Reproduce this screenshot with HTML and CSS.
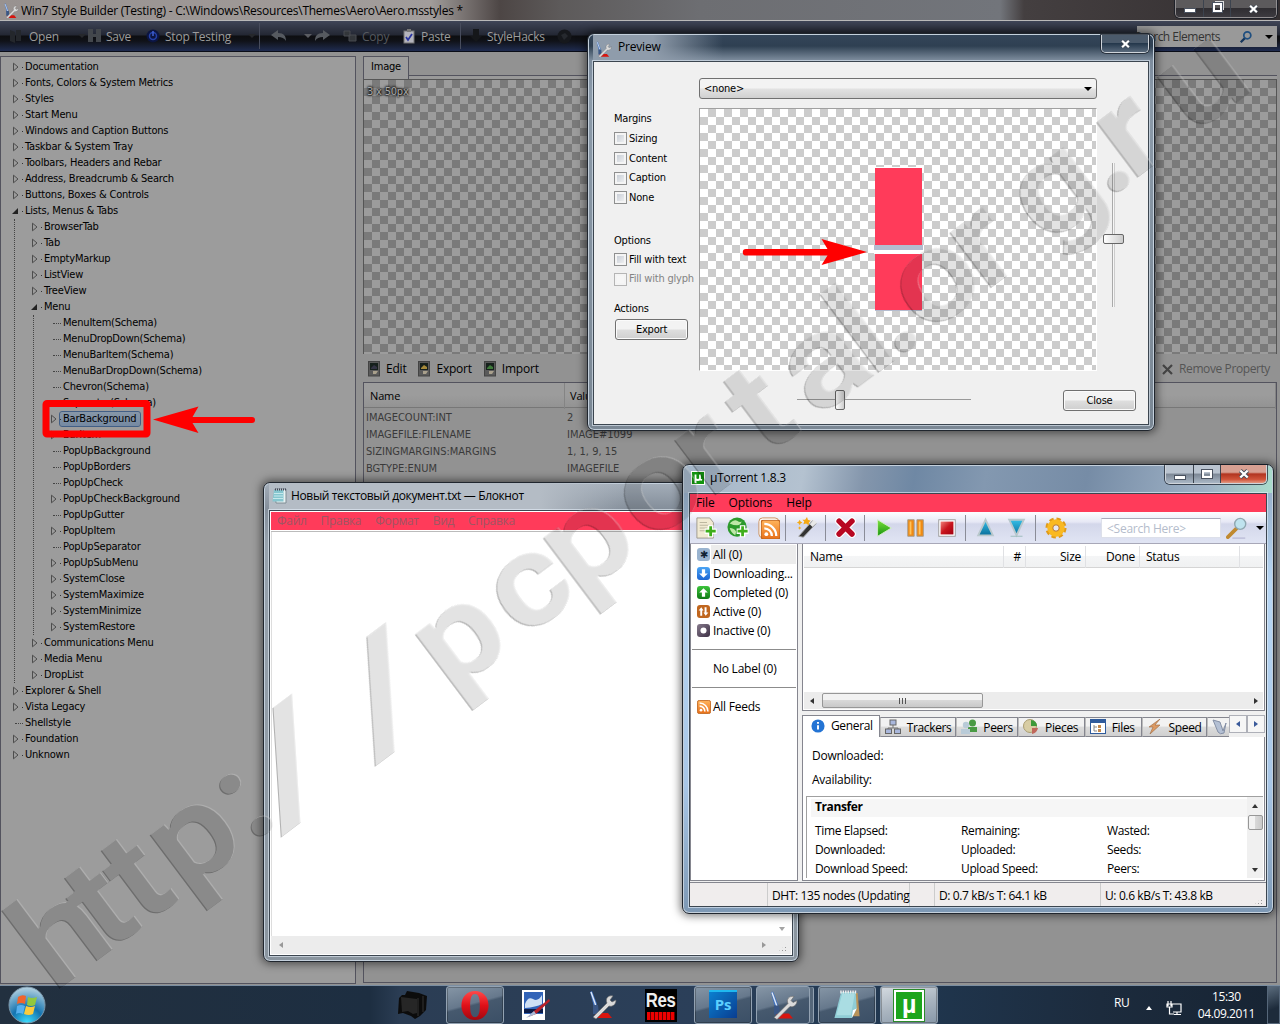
FILE: index.html
```html
<!DOCTYPE html>
<html lang="en">
<head>
<meta charset="utf-8">
<title>Win7 Style Builder</title>
<link rel="stylesheet" href="styles.css">
</head>
<body>
<svg class="defs" width="0" height="0">
  <defs>
    <linearGradient id="gGreen" x2="0" y2="1"><stop stop-color="#7be03c"/><stop offset="1" stop-color="#17930f"/></linearGradient>
    <linearGradient id="gOrange" x2="0" y2="1"><stop stop-color="#ffb45c"/><stop offset="1" stop-color="#e8701a"/></linearGradient>
    <linearGradient id="gTeal" x2="0" y2="1"><stop stop-color="#35c0e8"/><stop offset="1" stop-color="#0a6f9c"/></linearGradient>
    <linearGradient id="gRed" x2="1" y2="1"><stop stop-color="#f08078"/><stop offset=".5" stop-color="#c8141c"/><stop offset="1" stop-color="#a00010"/></linearGradient>
    <linearGradient id="gOpera" x2="0" y2="1"><stop stop-color="#ff4a4a"/><stop offset=".5" stop-color="#e01018"/><stop offset="1" stop-color="#a00810"/></linearGradient>
    <radialGradient id="gOrb" cx=".5" cy="1" r="1"><stop stop-color="#3fe0ff"/><stop offset=".45" stop-color="#1474b0"/><stop offset="1" stop-color="#b9d4e2"/></radialGradient>
    <filter id="emboss" x="0" y="0" width="1280" height="1024" filterUnits="userSpaceOnUse" color-interpolation-filters="sRGB">
      <feOffset in="SourceAlpha" dx="-1.200" dy="1.200" result="down"/>
      <feOffset in="SourceAlpha" dx="1.200" dy="-1.200" result="up"/>
      <feFlood flood-color="#000" flood-opacity=".11"/><feComposite in2="SourceAlpha" operator="in" result="body"/>
      <feFlood flood-color="#fff" flood-opacity=".3"/><feComposite in2="SourceAlpha" operator="in"/><feComposite in2="down" operator="out" result="light"/>
      <feFlood flood-color="#000" flood-opacity=".22"/><feComposite in2="SourceAlpha" operator="in"/><feComposite in2="up" operator="out" result="dark"/>
      <feMerge><feMergeNode in="body"/><feMergeNode in="light"/><feMergeNode in="dark"/></feMerge>
    </filter>
    <symbol id="cl" viewBox="0 0 8 10"><path d="M1.5 1.2v7.6L6 5z" fill="none" stroke="#4d4d4d"/></symbol>
    <symbol id="op" viewBox="0 0 8 10"><path d="M6 2v6H0z" fill="#222"/></symbol>
    <symbol id="tools" viewBox="0 0 30 30"><path d="M8 23h13l4 5H8z" fill="#d8150e"/><path d="M3 2l2-1 5 13-3 3z" fill="#3d6fc0"/><path d="M4 2l5 14" stroke="#dfe9f5" stroke-width="1.400"/><path d="M6 15h5l1 9H6z" fill="#3a5684"/><path d="M6 27L20 13c-2-4 1-8 6-7l-3 4 2 2 4-2c0 5-4 7-7 6L9 29z" fill="#dadada" stroke="#666" stroke-width=".6"/></symbol>
    <symbol id="rss" viewBox="0 0 16 16"><rect x=".5" y=".5" width="15" height="15" rx="2" fill="url(#gOrange)" stroke="#c0661e"/><circle cx="4.600" cy="11.600" r="1.500" fill="#fff"/><path d="M3 7a6 6 0 016 6M3 3.500A9.500 9.500 0 0112.500 13" fill="none" stroke="#fff" stroke-width="1.800"/></symbol>
    <symbol id="disk" viewBox="0 0 12 16"><rect x=".5" y=".5" width="11" height="14.500" fill="#5a5a5a" stroke="#444"/><rect x="2" y="2" width="8" height="7" fill="#16201c"/><path d="M3 7l3-3 3 2v2H3z" fill="currentColor"/><path d="M5 10h5l-2 3H5z" fill="#a9a08c"/></symbol>
    <symbol id="pad" viewBox="0 0 28 32"><path d="M8 3h17l2 24H18z" fill="#b9935a"/><path d="M8 2h15l1 17-5 10H1z" fill="#8fcdd6"/><path d="M9 4h13l-4 22H3z" fill="#b5e4e8" opacity=".7"/><path d="M7 2h17" stroke="#eee" stroke-width="3" stroke-dasharray="1.500 1"/><path d="M19 29l1-8 4-2z" fill="#fff"/></symbol>
    <symbol id="note" viewBox="0 0 15 16"><path d="M3 1h11v14H4z" fill="#e8f2f2" stroke="#7e8c94"/><path d="M2 2h9.500v11.500H.5z" fill="#86c6cf"/><path d="M2 5.500h9M2 8h9M1 10.500h10" stroke="#c6e9ec"/><path d="M3 1.500h11" stroke="#445" stroke-width="2" stroke-dasharray="1 1"/></symbol>
    <symbol id="x" viewBox="0 0 12 10"><path d="M2.300 1.500l7.400 7M9.700 1.500l-7.400 7" stroke="#444c58" stroke-width="4"/><path d="M2.300 1.500l7.400 7M9.700 1.500l-7.400 7" stroke="#fff" stroke-width="2.400"/></symbol>
    <symbol id="mag" viewBox="0 0 16 16"><path d="M2 14l5-5" stroke="#16365c" stroke-width="2.600"/><circle cx="9.500" cy="6" r="4" fill="none" stroke="#1f4f80" stroke-width="2"/></symbol>
  </defs>
</svg>

<main class="desktop">
  <section class="builder">
    <header class="builder-title">
      <svg width="16" height="16"><use href="#tools"/></svg>
      <span>Win7 Style Builder (Testing) - C:\Windows\Resources\Themes\Aero\Aero.msstyles *</span>
      <div class="caption dark">
        <b><i class="min"></i></b><b><i class="restore"></i></b><b class="wide"><svg width="11" height="10"><use href="#x"/></svg></b>
      </div>
    </header>
    <div class="toolbar">
      <div class="tools">
        <svg width="12" height="16"><path d="M0 2l5 2v11l-5-2zM6 2h5v11H6z" fill="#24272c"/></svg><span>Open</span>
        <i class="caret dim"></i>
        <svg width="14" height="16"><path d="M0 1h5v5h3V1h5v13H8V9H5v5H0z" fill="#43474c"/></svg><span>Save</span>
        <svg width="14" height="16"><circle cx="7" cy="8" r="6.500" fill="#0c1540"/><circle cx="7" cy="8" r="3.500" fill="none" stroke="#2440a8" stroke-width="1.500"/><path d="M7 3v5" stroke="#4060d0" stroke-width="1.500"/></svg><span>Stop Testing</span>
        <i class="caret dim"></i><i class="sep"></i>
        <svg width="16" height="14"><path d="M0 6l7-5v3c6 0 8 3 8 8-2-3-4-4-8-4v3z" fill="#565a60"/></svg>
        <i class="caret mid"></i>
        <svg width="16" height="14"><path d="M15 6L8 1v3C2 4 0 7 0 12c2-3 4-4 8-4v3z" fill="#565a60"/></svg>
        <svg width="14" height="14"><path d="M1 2h6v5H1zM6 6h7v6H6z" fill="#33363a" stroke="#484b50"/></svg><span class="off">Copy</span>
        <svg width="12" height="15"><rect x="1" y="2" width="10" height="12" fill="#b4b4bc" stroke="#777"/><path d="M4 0h4v3H4z" fill="#777"/><path d="M3 8l2 3 4-6" fill="none" stroke="#2a35a0" stroke-width="1.800"/></svg><span>Paste</span>
        <i class="sep"></i>
        <svg width="12" height="14"><path d="M3 0h6v7h3l-6 6-6-6h3z" fill="#15171a"/></svg><span>StyleHacks</span>
        <svg width="15" height="15"><circle cx="7.500" cy="7.500" r="7" fill="#16181c"/><path d="M4 6l4-2 3 3-4 4z" fill="#26292e"/></svg>
      </div>
      <div class="find"><span>Search Elements</span><svg width="14" height="14"><use href="#mag"/></svg><i class="caret"></i></div>
    </div>
    <div class="builder-body">
      <ul class="tree">
        <li><svg><use href="#cl"/></svg>Documentation</li>
        <li><svg><use href="#cl"/></svg>Fonts, Colors &amp; System Metrics</li>
        <li><svg><use href="#cl"/></svg>Styles</li>
        <li><svg><use href="#cl"/></svg>Start Menu</li>
        <li><svg><use href="#cl"/></svg>Windows and Caption Buttons</li>
        <li><svg><use href="#cl"/></svg>Taskbar &amp; System Tray</li>
        <li><svg><use href="#cl"/></svg>Toolbars, Headers and Rebar</li>
        <li><svg><use href="#cl"/></svg>Address, Breadcrumb &amp; Search</li>
        <li><svg><use href="#cl"/></svg>Buttons, Boxes &amp; Controls</li>
        <li><svg><use href="#op"/></svg>Lists, Menus &amp; Tabs
          <ul>
            <li><svg><use href="#cl"/></svg>BrowserTab</li>
            <li><svg><use href="#cl"/></svg>Tab</li>
            <li><svg><use href="#cl"/></svg>EmptyMarkup</li>
            <li><svg><use href="#cl"/></svg>ListView</li>
            <li><svg><use href="#cl"/></svg>TreeView</li>
            <li><svg><use href="#op"/></svg>Menu
              <ul>
                <li class="leaf">MenuItem(Schema)</li>
                <li class="leaf">MenuDropDown(Schema)</li>
                <li class="leaf">MenuBarItem(Schema)</li>
                <li class="leaf">MenuBarDropDown(Schema)</li>
                <li class="leaf">Chevron(Schema)</li>
                <li class="leaf">Separator(Schema)</li>
                <li><svg><use href="#cl"/></svg><mark>BarBackground</mark></li>
                <li><svg><use href="#cl"/></svg>BarItem</li>
                <li class="leaf">PopUpBackground</li>
                <li class="leaf">PopUpBorders</li>
                <li class="leaf">PopUpCheck</li>
                <li><svg><use href="#cl"/></svg>PopUpCheckBackground</li>
                <li class="leaf">PopUpGutter</li>
                <li><svg><use href="#cl"/></svg>PopUpItem</li>
                <li class="leaf">PopUpSeparator</li>
                <li><svg><use href="#cl"/></svg>PopUpSubMenu</li>
                <li><svg><use href="#cl"/></svg>SystemClose</li>
                <li><svg><use href="#cl"/></svg>SystemMaximize</li>
                <li><svg><use href="#cl"/></svg>SystemMinimize</li>
                <li><svg><use href="#cl"/></svg>SystemRestore</li>
              </ul>
            </li>
            <li><svg><use href="#cl"/></svg>Communications Menu</li>
            <li><svg><use href="#cl"/></svg>Media Menu</li>
            <li><svg><use href="#cl"/></svg>DropList</li>
          </ul>
        </li>
        <li><svg><use href="#cl"/></svg>Explorer &amp; Shell</li>
        <li><svg><use href="#cl"/></svg>Vista Legacy</li>
        <li class="leaf">Shellstyle</li>
        <li><svg><use href="#cl"/></svg>Foundation</li>
        <li><svg><use href="#cl"/></svg>Unknown</li>
      </ul>
      <div class="detail">
        <div class="tabrow"><span>Image</span></div>
        <div class="canvas checker"><span>3 x 50px</span></div>
        <div class="actions">
          <svg class="c1" width="12" height="16"><use href="#disk"/></svg><span>Edit</span>
          <svg class="c2" width="12" height="16"><use href="#disk"/></svg><span>Export</span>
          <svg class="c3" width="12" height="16"><use href="#disk"/></svg><span>Import</span>
          <span class="remove"><svg width="12" height="12"><path d="M1 2l9 9M10 2l-9 9" stroke="#444" stroke-width="2.200"/></svg>Remove Property</span>
        </div>
        <div class="props">
          <div class="head"><span>Name</span><span>Value</span></div>
          <div><span>IMAGECOUNT:INT</span><span>2</span></div>
          <div><span>IMAGEFILE:FILENAME</span><span>IMAGE#1099</span></div>
          <div><span>SIZINGMARGINS:MARGINS</span><span>1, 1, 9, 15</span></div>
          <div><span>BGTYPE:ENUM</span><span>IMAGEFILE</span></div>
        </div>
      </div>
    </div>
  </section>

  <section class="window preview">
    <header><svg width="17" height="17"><use href="#tools"/></svg><span>Preview</span>
      <div class="caption"><b class="wide"><svg width="11" height="10"><use href="#x"/></svg></b></div></header>
    <div class="client">
      <div class="opts">
        <h4>Margins</h4>
        <label><i></i>Sizing</label><label><i></i>Content</label><label><i></i>Caption</label><label><i></i>None</label>
        <h4 class="second">Options</h4>
        <label><i></i>Fill with text</label><label class="off"><i></i>Fill with glyph</label>
        <h4 class="third">Actions</h4>
        <button>Export</button>
      </div>
      <div class="stage-col">
        <div class="combo">&lt;none&gt;<i class="caret"></i></div>
        <div class="stage checker"><div class="bar"><i class="upper"></i><i class="grey"></i><i class="white"></i><i class="lower"></i></div></div>
        <div class="hslider"><i></i></div>
      </div>
      <div class="right-col"><div class="vslider"><i></i></div><button>Close</button></div>
    </div>
  </section>

  <section class="window notepad">
    <header><svg width="15" height="16"><use href="#note"/></svg><span>Новый текстовый документ.txt — Блокнот</span></header>
    <div class="client">
      <nav><span>Файл</span><span>Правка</span><span>Формат</span><span>Вид</span><span>Справка</span></nav>
      <div class="paper"><i class="arr d"></i></div>
      <div class="hscroll"><i class="arr l"></i><i class="arr r"></i><em></em></div>
    </div>
  </section>

  <section class="window torrent">
    <header><svg width="14" height="14" viewBox="0 0 14 14"><rect x=".5" y=".5" width="13" height="13" fill="#12940f" stroke="#fff"/><path d="M4.500 12V3.500M4.500 8q2.500 2 4.500 0M9 3.500V8.500l2 .5" fill="none" stroke="#fff" stroke-width="1.800"/></svg><span>µTorrent 1.8.3</span>
      <div class="caption"><b><i class="min"></i></b><b><i class="max"></i></b><b class="wide red"><svg width="12" height="10"><use href="#x"/></svg></b></div></header>
    <div class="client">
      <nav><span>File</span><span>Options</span><span>Help</span></nav>
      <div class="tbar">
        <svg viewBox="0 0 24 24"><path d="M1 1h14l4 5v17H1z" fill="#f1ead2" stroke="#9b968a"/><path d="M4 6h8M4 9h10M4 12h8M4 15h6" stroke="#b8b19b"/><path d="M16 9v13M9.500 15.500h13" stroke="#fff" stroke-width="6"/><path d="M16 10v11M10.500 15.500h11" stroke="#3fae1c" stroke-width="3"/></svg>
        <svg viewBox="0 0 24 24"><circle cx="11" cy="11" r="10.500" fill="#2c9a2c"/><path d="M3 7q5-5 8-3t5 1q-1 4-5 4t-8-2zM3 12q5 0 7 4l-1 4q-5-3-6-8z" fill="#bfe8a8"/><path d="M17 9v13M10.500 15.500h13" stroke="#fff" stroke-width="6"/><path d="M17 10v11M11.500 15.500h11" stroke="#3fae1c" stroke-width="3"/></svg>
        <svg viewBox="0 0 24 24"><rect x="1" y="1" width="21.500" height="21.500" rx="4" fill="#fff" stroke="#c98d58"/><svg x="2.750" y="2.750" width="18" height="18"><use href="#rss"/></svg></svg>
        <i class="sep"></i>
        <svg viewBox="0 0 24 24"><path d="M3 21L18 4l4 3L8 22z" fill="#333" stroke="#999"/><path d="M15 8l4-5 4 3-5 5z" fill="#e8e8e8"/><path d="M12 0l1 3 3 1-2 2v3l-3-2-3 1 1-3-2-2h3zM4 3l1 2 2 1-2 1-1 2-1-2-2-1 2-1zM4 10l.700 1.500L6 12l-1.300.500L4 14l-.700-1.500L2 12l1.300-.500z" fill="#f5a914"/></svg>
        <i class="sep"></i>
        <svg viewBox="0 0 24 24"><path d="M4.500 4.500l14 14M18.500 4.500l-14 14" stroke="#fff" stroke-width="8.500" stroke-linecap="round"/><path d="M4.500 4.500l14 14M18.500 4.500l-14 14" stroke="#b80822" stroke-width="6" stroke-linecap="round"/></svg>
        <i class="sep"></i>
        <svg viewBox="0 0 24 24"><path d="M5 3l15 9L5 21z" fill="url(#gGreen)" stroke="#d3efc6"/></svg>
        <svg viewBox="0 0 24 24"><path d="M3 3h7v18H3zM13 3h7v18h-7z" fill="#f08a12" stroke="#a29a8c"/><path d="M5 5h2v14H5zM15 5h2v14h-2z" fill="#ffc35c"/></svg>
        <svg viewBox="0 0 24 24"><rect x="3" y="3" width="18" height="18" fill="#fff" stroke="#999"/><rect x="5" y="5" width="14" height="14" fill="url(#gRed)"/></svg>
        <i class="sep"></i>
        <svg viewBox="0 0 24 24"><path d="M11.500 3l8 17h-16z" fill="url(#gTeal)" stroke="#b9c8cc" stroke-width="2"/></svg>
        <svg viewBox="0 0 24 24"><path d="M11.500 20l8-17h-16z" fill="url(#gTeal)" stroke="#b9c8cc" stroke-width="2"/><path d="M5 21h13" stroke="#9bb"/></svg>
        <i class="sep"></i>
        <svg viewBox="0 0 24 24"><circle cx="12" cy="12" r="9.500" fill="none" stroke="#e09a18" stroke-width="4" stroke-dasharray="4.500 3"/><circle cx="12" cy="12" r="6.500" fill="none" stroke="#f9b922" stroke-width="6"/><circle cx="12" cy="12" r="3.500" fill="#e6e8f4" stroke="#b86c10"/></svg>
        <span class="search">&lt;Search Here&gt;</span>
        <svg viewBox="0 0 24 24"><path d="M2 22l9-9" stroke="#c08a30" stroke-width="4" stroke-linecap="round"/><circle cx="15.500" cy="7.500" r="6" fill="#bfe3ee" stroke="#8fa7b0" stroke-width="1.500"/><path d="M7 23h14" stroke="#aac"/></svg>
        <i class="caret"></i>
      </div>
      <div class="work">
        <aside>
          <div class="sel"><i class="tag t1">✱</i><span>All (0)</span></div>
          <div><i class="tag t2"><svg viewBox="0 0 12 12"><path d="M4.500 2h3v4H10l-4 4-4-4h2.500z"/></svg></i><span>Downloading...</span></div>
          <div><i class="tag t3"><svg viewBox="0 0 12 12"><path d="M4.500 10h3V6H10L6 2 2 6h2.500z"/></svg></i><span>Completed (0)</span></div>
          <div><i class="tag t4"><svg viewBox="0 0 12 12"><path d="M3 10h1.800V5H6L4 2 1.500 5H3zM7 2h1.800v5H10.500L8 10 6 7h1z"/></svg></i><span>Active (0)</span></div>
          <div><i class="tag t5"><svg viewBox="0 0 12 12"><circle cx="6" cy="6" r="2.800"/></svg></i><span>Inactive (0)</span></div>
          <hr>
          <div><i class="tag none"></i><span>No Label (0)</span></div>
          <hr>
          <div><svg class="feed"><use href="#rss"/></svg><span>All Feeds</span></div>
        </aside>
        <div class="main">
          <div class="list">
            <div class="cols"><span>Name</span><span>#</span><span>Size</span><span>Done</span><span class="lft">Status</span><span class="cut"></span></div>
            <div class="hscroll"><i class="arr l"></i><b><u></u></b><i class="arr r"></i></div>
          </div>
          <div class="tabs">
            <span class="on"><svg viewBox="0 0 16 16"><circle cx="8" cy="8" r="7.500" fill="#2474d4"/><path d="M8 7v5M8 3.500v2" stroke="#fff" stroke-width="2.200"/></svg>General</span>
            <span><svg viewBox="0 0 16 16"><path d="M8 6v3M3 12V9h10v3" fill="none" stroke="#777"/><g fill="#a9b7dc" stroke="#666"><rect x="5" y="1" width="6" height="5"/><rect x=".5" y="10" width="6" height="4.500"/><rect x="9.500" y="10" width="6" height="4.500"/></g></svg>Trackers</span>
            <span><svg viewBox="0 0 16 16"><circle cx="11.500" cy="4" r="3.500" fill="#4a9a44"/><path d="M7 13V8h9v5z" fill="#4a9a44"/><circle cx="5" cy="6" r="3.200" fill="#b9cbd8"/><path d="M0 15v-5h9v5z" fill="#b9cbd8"/></svg>Peers</span>
            <span><svg viewBox="0 0 16 16"><circle cx="7" cy="7" r="6.500" fill="#d8cda4" stroke="#aa9d72"/><path d="M8 7V1a6 6 0 016 6z" fill="#3d9a3a"/><path d="M9 9h6q-1 5-6 6z" fill="#c0685c"/></svg>Pieces</span>
            <span><svg viewBox="0 0 16 16"><rect x=".5" y=".5" width="15" height="14" fill="#fff" stroke="#2f5b9c"/><path d="M0 0h16v4H0z" fill="#2f5b9c"/><path d="M4 6v6M4 8h3M4 12h3" stroke="#888"/><path d="M8 6h3v3H8zM8 10h3v3H8z" fill="#c4884a"/></svg>Files</span>
            <span><svg viewBox="0 0 16 16"><path d="M13 0L2 8h4L3 15l10-9H8z" fill="#dc9a64" stroke="#9c6840" stroke-width=".6"/></svg>Speed</span>
            <span class="last"><svg viewBox="0 0 16 16"><path d="M1 1l5 12q2 3 6 1l2-10-3 8L8 3z" fill="#b4c0d4" stroke="#8590a6"/></svg></span>
            <em><i class="arr l"></i></em><em><i class="arr r"></i></em>
          </div>
          <div class="pane">
            <p>Downloaded:</p><p>Availability:</p>
            <div class="stats">
              <div class="grid">
                <h5>Transfer</h5>
                <span>Time Elapsed:</span><span>Remaining:</span><span>Wasted:</span>
                <span>Downloaded:</span><span>Uploaded:</span><span>Seeds:</span>
                <span>Download Speed:</span><span>Upload Speed:</span><span>Peers:</span>
              </div>
              <div class="vscroll"><i class="arr u"></i><b></b><i class="arr d"></i></div>
            </div>
          </div>
        </div>
      </div>
      <footer><span></span><span>DHT: 135 nodes (Updating</span><span></span><span>D: 0.7 kB/s T: 64.1 kB</span><span>U: 0.6 kB/s T: 43.8 kB</span><em class="grip"></em></footer>
    </div>
  </section>

  <footer class="taskbar">
    <svg class="orb" viewBox="0 0 38 38"><circle cx="19" cy="19" r="18" fill="url(#gOrb)" stroke="#7c97aa"/><path d="M10 11q4-3 8-1l-1 8q-4-2-8 0z" fill="#f0642c"/><path d="M20 11q4 2 9 0l-2 8q-4 2-8 0z" fill="#92c83e"/><path d="M9 20q4-2 8 0l-2 8q-4-2-7 0z" fill="#56b0ee"/><path d="M18 20q5 2 9 0l-2 8q-4 2-9 0z" fill="#fccb3c"/></svg>
    <svg class="ico" viewBox="0 0 30 30"><path d="M1 8l3-3 3 0 2-4 12 2 8 3-1 14-6 6-5 3-4-3-8-3-5 1z" fill="#0c0c0c"/><path d="M3 7l16 2v14l-4 1-5-3-6 1z" fill="#262626"/><path d="M20 8v18M25 6v16" stroke="#333"/></svg>
    <div class="task"><svg viewBox="0 0 30 32"><path fill-rule="evenodd" d="M15 1c8 0 14 6 14 15s-6 15-14 15S1 25 1 16 7 1 15 1zm0 3c-4 0-5 5-5 12s1 12 5 12 5-5 5-12-1-12-5-12z" fill="url(#gOpera)"/></svg></div>
    <svg class="ico" viewBox="0 0 30 30"><path d="M1 0h23v30H1z" fill="#fff"/><path d="M3 2h19v22H3z" fill="#3264b8"/><path d="M4 14q3-8 8-5t9-4v9q-6 3-17 4z" fill="#cfe0f4"/><path d="M3 19h19v4H3z" fill="#0c1c48"/><path d="M28 9L13 21l-6 6 8-3 14-13z" fill="#b82028"/><path d="M13 21l-8 7 10-4z" fill="#a8bcd8"/></svg>
    <svg class="ico" viewBox="0 0 30 30"><use href="#tools"/></svg>
    <div class="res"><b>Res</b><i></i></div>
    <div class="task"><div class="ps">Ps</div></div>
    <div class="task stack"><svg viewBox="0 0 30 30"><use href="#tools"/></svg></div>
    <div class="task"><svg viewBox="0 0 28 32"><use href="#pad"/></svg></div>
    <div class="task active"><div class="mu">µ</div></div>
    <div class="tray"><span>RU</span><i class="arr u"></i><svg width="16" height="16"><path d="M2 1v5M5 1v5M1 4h5v3H1zM3.500 7v7H8M6 4h9v8H7M11 12v2M8 14.500h7" fill="none" stroke="#fff" stroke-width="1.200"/></svg><div class="clock">15:30<br>04.09.2011</div></div>
    <div class="peek"></div>
  </footer>

  <svg class="marks" width="1280" height="1024">
    <rect x="46" y="403.500" width="101" height="30.500" rx="1" fill="none" stroke="#f00" stroke-width="7" stroke-linejoin="round"/>
    <path d="M153 419.500l45.500-13-6 10.500H252a3 3 0 010 6h-59.500l6 10z" fill="#f00"/>
    <path d="M867 252l-45.500-13 6 10H746a3 3 0 000 6.500h81.500l-6 9.500z" fill="#f00"/>
    <g filter="url(#emboss)">
      <g class="stamp" transform="translate(61 988) rotate(-36.970) scale(1.120 1)">
        <text x="-8 50 91 138 212">http:</text>
        <text class="slash" transform="translate(247 0) skewX(-14)">/</text>
        <text class="slash" transform="translate(352 0) skewX(-14)">/</text>
        <text x="435 515 578 657 724 787 844 905 931 966 1032 1100 1169 1196 1264">pcportal.org.ru</text>
      </g>
    </g>
  </svg>
</main>
</body>
</html>
```
FILE: styles.css
```css
* { box-sizing: border-box; }
body { margin: 0; background: #000; }
.defs { position: absolute; }
i, em { font-style: normal; }
svg { display: block; flex: none; }
ul { list-style: none; margin: 0; padding: 0; }
.desktop {
  position: relative; width: 1280px; height: 1024px; overflow: hidden;
  font: 11px/16px "DejaVu Sans Condensed", "DejaVu Sans", sans-serif; letter-spacing: -.2px; color: #000;
}
.caret { width: 0; height: 0; border: 4px solid transparent; border-top-color: #000; border-bottom: 0; align-self: center; }
.caret.dim { border-top-color: #26282c; }
.caret.mid { border-top-color: #5a5c62; }
.arr { display: block; width: 0; height: 0; border: 3.5px solid transparent; }
.arr.l { border-right: 4px solid #333; border-left: 0; }
.arr.r { border-left: 4px solid #333; border-right: 0; }
.arr.d { border-top: 4px solid #333; border-bottom: 0; }
.arr.u { border-bottom: 4px solid #333; border-top: 0; }
.checker { background: repeating-conic-gradient(var(--a) 0 25%, var(--b) 0 50%) 0 0 / 16px 16px; }

/* main editor window */
.builder { height: 985px; display: flex; flex-direction: column; background: #929292; }
.builder-title {
  height: 21px; flex: none; display: flex; padding-left: 3px; gap: 2px; border-bottom: 1px solid #b9b9b9;
  background: linear-gradient(90deg, #989290 0, #a29d9b 430px, #4d4645 500px, #5d5a5a 560px, #6d6e72 700px, #72757b 1000px, #443f40 1024px, #342f31 1280px);
  font: 12px/21px "Open Sans", sans-serif; letter-spacing: -.25px;
}
.builder-title svg { margin-top: 3px; }
.caption { margin-left: auto; display: flex; height: 19px; border: 1px solid #cfd4da; border-top: 0; border-radius: 0 0 5px 5px; box-shadow: 0 0 0 1px rgba(20,25,35,.7); overflow: hidden; }
.caption b { width: 27px; display: flex; align-items: center; justify-content: center; background: linear-gradient(#b9c3cf 45%, #7c8795 50%, #a9b6c4); border-left: 1px solid #3c434e; }
.caption b:first-child { border-left: 0; }
.caption b.wide { width: 46px; }
.caption b.red { background: linear-gradient(#d8a092 40%, #b23520 50%, #d0543a 80%, #e39a84); }
.caption .min { width: 12px; height: 5px; background: #fff; border: 1px solid #4a5260; margin-top: 6px; }
.caption .max, .caption .restore { width: 10px; height: 8px; border: 2px solid #fff; outline: 1px solid #4a5260; }
.caption .restore { width: 9px; height: 9px; box-shadow: 2px -2px 0 #ddd; border-width: 2px; }
.caption.dark { height: 18px; margin-right: 3px; border-color: #918e90; }
.caption.dark b { background: linear-gradient(#5c5a5c 45%, #302e32 50%, #3c3a40); }
.caption.dark svg, .caption.dark i { margin-bottom: 2px; }
.toolbar { height: 31px; flex: none; display: flex; align-items: center; justify-content: space-between; padding: 0 3px 0 10px; border-bottom: 1px solid #0a0d18; background: linear-gradient(#3f4557 0, #232733 14px, #0d0e11 15px, #101218 20px, #1f2c50 30px); color: #9c9c9c; font: 12px/30px "Open Sans", sans-serif; letter-spacing: -.22px; }
.tools { display: grid; align-items: center; grid-template-columns: 19px 49px 10px 18px 40px 19px 83px 11px 12px 33px 11px 28px 19px 41px 18px 39px 10px 17px 70px 20px; white-space: nowrap; }
.tools span { position: relative; top: 1px; }
.tools .off { color: #55585e; }
.sep { width: 1px; height: 26px; background: #474c5c; align-self: center; }
.find { width: 140px; height: 21px; margin-top: 1px; background: #999; color: #333; display: flex; align-items: center; justify-content: flex-end; gap: 12px; padding-right: 4px; line-height: 20px; letter-spacing: -.5px; white-space: nowrap; }
.find span { margin-right: 7px; }
.builder-body { flex: 1; display: flex; gap: 7px; padding: 4px 3px 1px 0; min-height: 0; }
.tree { width: 356px; flex: none; border: 1px solid #53535e; background: #9c9c9c; padding: 2px 0 0 11px; }
.tree li { line-height: 16px; padding-left: 13px; position: relative; white-space: nowrap; }
.tree li > svg { position: absolute; left: 0; top: 3px; width: 8px; height: 10px; }
.tree li::before { content: ""; position: absolute; left: 10px; top: 8px; width: 1px; height: 1px; background: #333; }
.tree li.leaf::before { left: 3px; width: 8px; height: 0; background: none; border-top: 1px dotted #444; }
.tree ul { margin-left: -11px; padding-left: 16px; border-left: 1px dotted #444; }
.tree mark { background: linear-gradient(#8797a8, #7589a2); color: #000; outline: 1px solid #425f86; border-radius: 2px; padding: 0 4px 0 3px; margin-left: -3px; display: inline-block; height: 14px; line-height: 14px; }
.detail { flex: 1; display: flex; flex-direction: column; }
.tabrow { height: 23px; display: flex; border-bottom: 3px solid #999; }
.tabrow::after { content: ""; flex: 1; border-bottom: 1px solid #53535e; }
.tabrow span { width: 46px; height: 23px; border: 1px solid #53535e; border-bottom: 0; background: #9c9c9c; text-align: center; line-height: 20px; }
.canvas { --a: #7a7a7a; --b: #9c9c9c; height: 275px; border: 1px solid #555; border-bottom: 0; padding: 4px 3px; }
.canvas span { color: #aaa; text-shadow: 0 0 2px #000, 0 0 3px #000, 0 0 3px #000; }
.actions { height: 28px; display: flex; align-items: center; padding: 2px 7px 0 5px; font: 12px/20px "Open Sans", sans-serif; letter-spacing: -.22px; }
.actions span { margin: 0 12px 0 6px; }
.c1 { color: #334; } .c2 { color: #a68a3a; } .c3 { color: #3e7a3a; }
.actions .remove { margin: 0 0 0 auto; color: #555; display: flex; gap: 5px; align-items: center; letter-spacing: -.4px; }
.props { flex: 1; border: 1px solid #53535e; margin-bottom: 1px; }
.props div { height: 17px; display: grid; grid-template-columns: 201px 1fr; padding-left: 2px; line-height: 17px; color: #3a3a3a; letter-spacing: 0; }
.props .head { height: 25px; margin-bottom: 1px; padding-left: 1px; grid-template-columns: 200px 1fr; line-height: 26px; color: #000; background: linear-gradient(#9c9c9c 50%, #939393); border-bottom: 1px solid #777; letter-spacing: -.15px; font-family: "Open Sans", sans-serif; }
.head span { border-right: 1px solid #848484; padding-left: 5px; }

/* glass windows */
.window { position: absolute; border-radius: 7px; border: 1px solid #20262e; box-shadow: inset 0 0 0 1px #c4d0dc, 0 0 8px 2px rgba(0,0,0,.5); display: flex; flex-direction: column; }
.window header { display: flex; align-items: center; flex: none; }
.window header .caption { align-self: flex-start; }
.client { flex: 1; border: 1px solid #3c4650; outline: 1px solid rgba(230,240,250,.6); background: #f0f0f0; min-height: 0; }
.preview { left: 587px; top: 33px; width: 568px; height: 398px; padding: 0 5px 5px; background: linear-gradient(#34465a 0, #2f4052 12px, #7c8b9c 26px, #8c9baa 60px, #7a8794 100%); }
.preview header { height: 26px; gap: 6px; padding-left: 2px; margin-top: 1px; font: 12px/22px "Open Sans", sans-serif; background: linear-gradient(90deg, #8f9cab 60px, transparent 130px); }
.preview header span { margin-bottom: 2px; }
.preview header svg { margin-top: 3px; }
.preview .caption { height: 18px; }
.preview .caption svg { margin-top: 0; }
.preview .caption b { background: linear-gradient(#4b5a6b 45%, #25384c 50%, #5a6a7c); }
.preview .client { display: grid; grid-template-columns: 105px 398px minmax(0, 1fr); }
.opts { padding: 49px 0 0 20px; display: flex; flex-direction: column; white-space: nowrap; }
.opts h4 { font: inherit; margin: 0 0 2px; }
.opts label { display: flex; align-items: center; gap: 2px; height: 19.700px; }
.opts label i { width: 13px; height: 13px; border: 1px solid #8e8f8f; background: linear-gradient(135deg, #bfc6d0, #f6f6f6); box-shadow: inset 0 0 0 2px #f4f4f4; }
.opts .off { color: #838383; } .opts .off i { background: #f6f6f6; border-color: #b5b5b5; }
.opts .second { margin: 25px 0 1px; } .opts .third { margin: 12px 0 2px; }
button { width: 73px; height: 21px; border: 1px solid #707070; border-radius: 3px; padding: 0; font: inherit; letter-spacing: inherit; background: linear-gradient(#f3f3f3 48%, #dedede 52%, #cfcfcf); box-shadow: inset 0 0 0 1px #fbfbfb; flex: none; }
.opts button { margin-left: 1px; }
.stage-col { padding-top: 16px; }
.combo { height: 21px; border: 1px solid #707070; border-radius: 3px; display: flex; justify-content: space-between; align-items: center; padding: 0 4px; background: linear-gradient(#f3f3f3 48%, #e2e2e2 52%, #d0d0d0); letter-spacing: -.2px; }
.stage { --a: #ccc; --b: #fff; height: 263px; margin-top: 9px; border: 1px solid #a0a0a0; border-right-color: #fff; border-bottom-color: #fff; }
.bar { width: 49px; margin: 58px 0 0 174px; display: flex; flex-direction: column; }
.bar i { display: block; height: 78px; margin: 0 1px; background: #ff3b5a; }
.bar .upper { border-top: 1px solid #fff; }
.bar .grey { height: 5px; margin: 0; background: #b4bccf; }
.bar .white { height: 4px; margin: 0; background: #fff; }
.bar .lower { height: 57px; border-bottom: 1px solid #b4bccf; }
.hslider { margin: 19px 126px 0 98px; height: 20px; background: linear-gradient(#999, #999) 0 9px / 100% 1px no-repeat; padding-left: 38px; }
.hslider i, .vslider i { display: block; width: 10px; height: 20px; border: 1px solid #666; border-radius: 2px; background: linear-gradient(90deg, #fff, #ccc); }
.right-col { padding: 101px 12px 0 0; display: flex; flex-direction: column; align-items: flex-end; }
.vslider { width: 21px; height: 144px; margin-right: 12px; margin-bottom: 83px; padding-top: 71px; background: linear-gradient(90deg, #aaa 1px, #f6f6f6 1px, #f6f6f6 2px, #ccc 2px) 9px 0 / 3px 100% no-repeat; }
.vslider i { width: 21px; height: 10px; }

.notepad { left: 263px; top: 482px; width: 536px; height: 480px; padding: 0 5px 5px; background: linear-gradient(#a4aeb9 0, #848e9a 26px, #96a1ac 60px, #8a959f 100%); }
.notepad header { height: 27px; gap: 4px; padding: 0 0 2px 3px; font: 12px/25px "Open Sans", sans-serif; letter-spacing: -.36px; background: linear-gradient(90deg, #b4bcc5 270px, transparent 360px); }
.notepad .client { display: flex; flex-direction: column; background: #fff; padding: 1px; }
.notepad nav { height: 18px; display: flex; background: #ff3b5a; color: #a05563; padding-left: 6px; gap: 14px; font: 12px/18px "Open Sans", sans-serif; letter-spacing: -.3px; flex: none; }
.paper { flex: 1; margin-top: 1px; border-top: 1px solid #bbb; display: flex; align-items: flex-end; justify-content: flex-end; padding: 0 6px 5px; box-shadow: inset 1px 0 #ddd; }
.notepad .arr { opacity: .45; }
.hscroll { height: 17px; background: #ececec; display: flex; align-items: center; justify-content: space-between; padding: 0 8px; }
.notepad .hscroll { padding-right: 3px; height: 18px; }
.notepad .hscroll .r { margin-left: auto; }
.notepad .hscroll em, .grip { width: 10px; height: 9px; margin: 5px 0 0 12px; background: radial-gradient(circle, #999 1px, transparent 1px) 0 0 / 3px 3px; clip-path: polygon(100% 0, 100% 100%, 0 100%); }

.torrent { left: 682px; top: 464px; width: 592px; height: 450px; padding: 0 6px 6px; font: 12px/19px "Open Sans", sans-serif; letter-spacing: -.25px; background: linear-gradient(100deg, #a4b6c8 0, #b4c2d0 120px, #8496ac 180px, #6f88a4 230px, #8398b0 300px, #768ca6 400px, #9fb2c6 520px, #adc) 0 0 / 100% 28px no-repeat, linear-gradient(#8fa6bf 0, #b7d6f4 120px, #a8c6e6 320px, #7d98b4); }
.torrent header { height: 28px; gap: 5px; padding: 0 0 3px 2px; }
.torrent .caption { height: 19px; margin-right: 0; }
.torrent .client { display: flex; flex-direction: column; background: #f0f0f0; border-width: 1px; }
.torrent nav { height: 18px; flex: none; background: #ff3b5a; display: flex; gap: 14px; padding-left: 6px; line-height: 18px; letter-spacing: -.1px; }
.tbar { height: 32px; flex: none; display: grid; align-items: center; padding-left: 6px; border-bottom: 1px solid #a8a8b8; background: linear-gradient(#fdfdff 0, #e6e8f5 10px, #d3d7ea 12px, #e0e4f3 30px); grid-template-columns: 31px 31px 27px 11px 29px 10px 29px 9px 32px 31px 29px 10px 31px 29px 10px 56px 125px 30px 8px; }
.tbar svg { width: 22px; height: 22px; }
.tbar .sep { background: #8a8c98; }
.search { width: 120px; height: 20px; border: 1px solid #dde0ea; border-top-color: #aab; background: #fff; color: #b4bccb; padding-left: 5px; line-height: 19px; }
.work { flex: 1; display: flex; gap: 4px; min-height: 0; }
aside { width: 108px; background: #fff; border: 1px solid #85868f; border-top: 0; padding-top: 1px; }
aside div { height: 19px; display: flex; align-items: center; gap: 3px; padding-left: 6px; white-space: nowrap; }
aside .sel span { background: #ececec; flex: 1; height: 19px; margin-left: -2px; padding-left: 2px; margin-right: 1px; }
aside hr { margin: 9px 1px; border: 0; border-top: 1px solid #8c8c8c; }
.tag { width: 13px; height: 13px; border-radius: 3px; color: #123; font-size: 10px; line-height: 13px; text-align: center; flex: none; }
.tag svg { width: 13px; height: 13px; fill: #fff; }
.t1 { background: #9ab4d0; } .t2 { background: linear-gradient(#4aa4f4, #1c66d4); } .t3 { background: linear-gradient(#3cc43c, #0f7a14); } .t4 { background: #c0661e; } .t5 { background: linear-gradient(135deg, #867a8c, #3c2f44); }
.feed { width: 14px; height: 14px; margin-right: -1px; }
.main { flex: 1; display: flex; flex-direction: column; min-width: 0; padding-right: 1px; }
.list { height: 167px; flex: none; border: 1px solid #85868f; border-top: 0; background: #fff; display: flex; flex-direction: column; justify-content: space-between; padding: 2px 1px 1px; }
.cols { height: 22px; display: grid; grid-template-columns: 200px 22px 60px 54px 100px 1fr; background: linear-gradient(#fff 45%, #f4f5f6 50%, #f0f1f2); border-bottom: 1px solid #d5d5d5; line-height: 22px; }
.cols span { border-right: 1px solid #e0e1e4; text-align: right; padding: 0 4px 0 6px; }
.cols span:first-child, .cols .lft { text-align: left; }
.cols .cut { border: 0; }
.hscroll b { width: 161px; height: 15px; border: 1px solid #979797; border-radius: 2px; background: linear-gradient(#f2f2f2 45%, #d8d8d8 50%, #c9c9c9); display: flex; align-items: center; justify-content: center; }
.hscroll b u { width: 8px; height: 6px; background: repeating-linear-gradient(90deg, #555 0 1px, transparent 1px 3px); }
.list .hscroll { justify-content: flex-start; gap: 8px; padding: 0 5px 0 6px; }
.list .hscroll .r { margin-left: auto; }
.tabs { height: 26px; flex: none; display: flex; align-items: flex-end; padding-top: 4px; }
.tabs span { height: 20px; display: flex; align-items: center; gap: 6px; padding-left: 4px; border: 1px solid #85868f; border-left-color: #bbb; background: linear-gradient(#f2f2f2 45%, #dcdcdc 50%, #d0d0d0); width: 77px; white-space: nowrap; overflow: hidden; letter-spacing: -.35px; }
.tabs span.on { width: 78px; height: 22px; background: #fff; padding-left: 8px; gap: 6px; padding-bottom: 2px; border-left-color: #85868f; border-bottom: 0; }
.tabs span:nth-child(3) { width: 62px; } .tabs span:nth-child(4) { width: 67px; } .tabs span:nth-child(5) { width: 57px; } .tabs span:nth-child(6) { width: 66px; } .tabs span.last { width: 22px; margin-right: auto; border-right: 0; }
.tabs svg { width: 16px; height: 16px; }
.tabs span.on svg { width: 14px; height: 14px; }
.tabs em { width: 18px; height: 18px; border: 1px solid #aeb0b8; background: #f6f6f6; display: flex; align-items: center; justify-content: center; align-self: flex-start; }
.tabs em .l { border-right-color: #3a5a9a; } .tabs em .r { border-left-color: #3a5a9a; }
.pane { flex: 1; border: 1px solid #85868f; border-top: 0; background: #fff; padding: 7px 1px 2px 3px; min-height: 0; display: flex; flex-direction: column; }
.pane p { margin: 0 0 2px 6px; height: 22px; line-height: 23px; }
.stats { flex: 1; display: flex; border: 1px solid #a0a0a0; border-right: 0; border-bottom: 0; margin-top: 4px; min-height: 0; letter-spacing: -.36px; }
.grid { flex: 1; display: grid; grid-template-columns: 146px 146px 1fr; grid-template-rows: 22px 19px 19px 19px; padding-left: 8px; align-content: start; background: linear-gradient(#f6f6f6, #f6f6f6) 4px 2px / 100% 18px no-repeat; }
.grid h5 { grid-column: 1 / -1; margin: 0; font: bold 12px/20px "Open Sans", sans-serif; letter-spacing: -.4px; }
.grid span { line-height: 23px; }
.vscroll { width: 16px; background: #f0f0f0; display: flex; flex-direction: column; align-items: center; padding: 7px 0 6px; }
.vscroll b { width: 15px; height: 15px; margin-top: 7px; border: 1px solid #979797; border-radius: 2px; background: linear-gradient(90deg, #f2f2f2 45%, #d8d8d8 50%, #c9c9c9); }
.vscroll .d { margin-top: auto; }
.torrent footer { height: 24px; flex: none; display: flex; border-top: 1px solid #85868f; margin-top: 1px; background: #f0eded; line-height: 26px; letter-spacing: -.38px; }
.torrent footer span { border-right: 1px solid #ccc; padding-left: 4px; white-space: nowrap; width: 78px; }
.torrent footer span:nth-child(2) { width: 142px; } .torrent footer span:nth-child(3) { width: 25px; } .torrent footer span:nth-child(4) { width: 166px; } .torrent footer span:nth-child(5) { width: 150px; border: 0; }
.torrent footer em { margin: 13px 2px 0 auto; }

/* taskbar */
.taskbar { height: 39px; display: grid; grid-template-columns: 390px 48px 75px 66px 58px 49px 62px 62px 62px 176px 160px 1fr; align-items: center; padding-left: 8px; border-top: 1px solid #7b8ea2; background: linear-gradient(90deg, #22303f 0, #1d2e41 370px, #2b3d54 400px, #2b3f59 700px, #203750 900px, #1c2b3d 1100px, #172433); }
.taskbar .orb { width: 38px; height: 38px; }
.ico { width: 30px; height: 30px; }
.task { width: 58px; height: 38px; border: 1px solid #93a2b2; border-radius: 3px; background: linear-gradient(165deg, #8696a6 0, #66788c 45%, #46596e 50%, #3b4f66); display: flex; align-items: center; justify-content: center; box-shadow: inset 0 0 0 1px rgba(0,0,0,.25); }
.task svg { width: 30px; height: 31px; }
.task.stack { width: 54px; box-shadow: 4px 0 0 -1px #55677a, 5px 0 0 -1px #93a2b2; }
.task.active { background: linear-gradient(165deg, #d4dae0, #aab5c0 50%, #8797a8); }
.res { width: 32px; height: 33px; background: #000; color: #eee; }
.res b { display: block; width: 32px; font: bold 21px/22px "Liberation Sans", sans-serif; transform: scaleX(.8); transform-origin: 0 0; letter-spacing: -.5px; padding-left: 1px; }
.res i { display: block; height: 8px; margin: 1px 2px; background: repeating-linear-gradient(90deg, #e00 0 3px, #600 3px 4px); }
.ps { width: 28px; height: 28px; margin-bottom: 3px; border-top: 2px solid #20b8f0; background: linear-gradient(135deg, #0a80d0, #0a3d90); color: #5cd0ff; font: bold 15px/25px "Open Sans", sans-serif; text-align: center; }
.mu { width: 30px; height: 31px; border: 2px solid #fff; outline: 1px solid #2a8a2a; background: #1ca51c; color: #fff; font: bold 25px/24px "Liberation Sans", sans-serif; text-align: center; }
.tray { display: flex; align-items: center; color: #fff; font: 12px/17px "Open Sans", sans-serif; letter-spacing: -.4px; padding-left: 58px; }
.tray .arr { border-bottom-color: #fff; margin: 5px 14px 0 17px; }
.tray > span { margin-bottom: 5px; }
.tray svg { margin-top: 5px; }
.clock { width: 88px; text-align: center; flex: none; }
.peek { justify-self: end; width: 13px; height: 38px; border: 1px solid #56677a; background: linear-gradient(160deg, #5a6b7c, #1d2b3b 60%); }

/* annotations */
.marks { position: absolute; left: 0; top: 0; }
.stamp { font: bold 130px Roboto, sans-serif; letter-spacing: 0; }
.slash { stroke: #000; stroke-width: 8; }
```
